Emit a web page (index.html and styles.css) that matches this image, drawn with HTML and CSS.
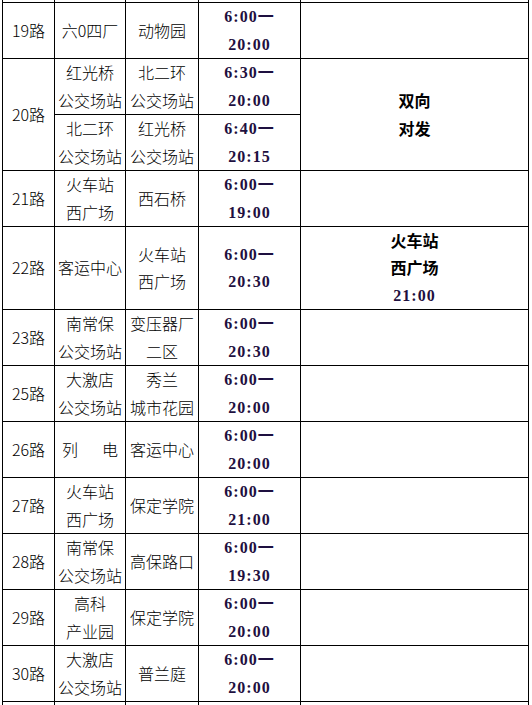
FILE: index.html
```html
<!DOCTYPE html>
<html lang="zh-CN">
<head>
<meta charset="utf-8">
<title>公交线路时刻表</title>
<link rel="stylesheet" href="styles.css">
</head>
<body>
<div class="wrap">
<table class="bus">
  <colgroup>
    <col class="c1"><col class="c2"><col class="c3"><col class="c4"><col class="c5">
  </colgroup>
  <tbody>
    <tr class="stub"><td></td><td></td><td></td><td></td><td></td></tr>
    <tr>
      <td>19路</td><td>六0四厂</td><td>动物园</td>
      <td class="t">6:00一<br>20:00</td><td></td>
    </tr>
    <tr>
      <td rowspan="2">20路</td><td>红光桥<br>公交场站</td><td>北二环<br>公交场站</td>
      <td class="t">6:30一<br>20:00</td><td rowspan="2" class="note">双向<br>对发</td>
    </tr>
    <tr>
      <td>北二环<br>公交场站</td><td>红光桥<br>公交场站</td>
      <td class="t">6:40一<br>20:15</td>
    </tr>
    <tr>
      <td>21路</td><td>火车站<br>西广场</td><td>西石桥</td>
      <td class="t">6:00一<br>19:00</td><td></td>
    </tr>
    <tr>
      <td>22路</td><td>客运中心</td><td>火车站<br>西广场</td>
      <td class="t">6:00一<br>20:30</td><td class="note three">火车站<br>西广场<br><span class="tn">21:00</span></td>
    </tr>
    <tr>
      <td>23路</td><td>南常保<br>公交场站</td><td>变压器厂<br>二区</td>
      <td class="t">6:00一<br>20:30</td><td></td>
    </tr>
    <tr>
      <td>25路</td><td>大激店<br>公交场站</td><td>秀兰<br>城市花园</td>
      <td class="t">6:00一<br>20:00</td><td></td>
    </tr>
    <tr>
      <td>26路</td><td>列&emsp;&ensp;电</td><td>客运中心</td>
      <td class="t">6:00一<br>20:00</td><td></td>
    </tr>
    <tr>
      <td>27路</td><td>火车站<br>西广场</td><td>保定学院</td>
      <td class="t">6:00一<br>21:00</td><td></td>
    </tr>
    <tr>
      <td>28路</td><td>南常保<br>公交场站</td><td>高保路口</td>
      <td class="t">6:00一<br>19:30</td><td></td>
    </tr>
    <tr>
      <td>29路</td><td>高科<br>产业园</td><td>保定学院</td>
      <td class="t">6:00一<br>20:00</td><td></td>
    </tr>
    <tr>
      <td>30路</td><td>大激店<br>公交场站</td><td>普兰庭</td>
      <td class="t">6:00一<br>20:00</td><td></td>
    </tr>
    <tr class="tail"><td></td><td></td><td></td><td></td><td></td></tr>
  </tbody>
</table>
</div>
</body>
</html>
```
FILE: styles.css
```css
html, body {
  margin: 0;
  padding: 0;
  background: #fff;
  overflow: hidden;
}
.wrap {
  padding: 0 0 0 2px;
}
.bus {
  border-collapse: collapse;
  table-layout: fixed;
  width: 526px;
  font-family: "Noto Sans CJK SC", "Noto Sans", sans-serif;
  font-size: 16px;
  font-weight: 300;
  color: #000;
}
.c1 { width: 52px; }
.c2 { width: 71px; }
.c3 { width: 73px; }
.c4 { width: 102px; }
.c5 { width: 228px; }
.bus td {
  border: 1px solid #000;
  padding: 0;
  text-align: center;
  vertical-align: middle;
  line-height: 27.5px;
  white-space: nowrap;
  overflow: hidden;
}
.bus .stub td {
  border-top: none;
  height: 2px;
  line-height: 2px;
}
.bus .tail td {
  height: 40px;
}
.bus td.t {
  font-family: "Liberation Serif", "Noto Sans CJK SC", serif;
  font-weight: bold;
  letter-spacing: 1px;
  color: #1e1040;
}
.bus td.note {
  font-weight: bold;
}
.bus td.three {
  line-height: 27px;
}
.tn {
  font-family: "Liberation Serif", serif;
  letter-spacing: 1px;
  color: #1e1040;
}
```
